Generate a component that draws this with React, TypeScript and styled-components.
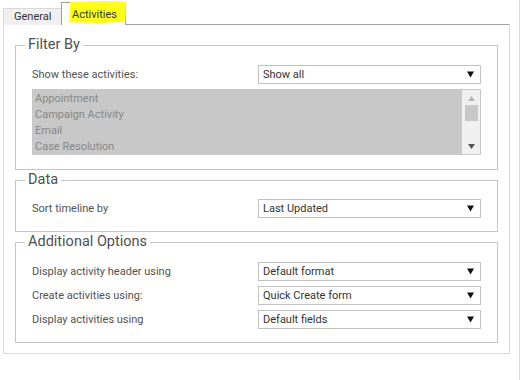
import React from "react";
import styled, { createGlobalStyle } from "styled-components";

const Global = createGlobalStyle`
  html, body { margin: 0; padding: 0; background: #ffffff; }
  body { font-family: "Segoe UI", Roboto, "Open Sans", sans-serif; color: #444; }
  * { box-sizing: border-box; }
`;

const Page = styled.div`
  width: 520px;
  min-height: 380px;
  padding-left: 3px;
  border-right: 1px solid #dcdcdc;
`;

const Window = styled.div`
  width: 507px;
  display: flex;
  flex-direction: column;
`;

const TabBar = styled.div`
  display: flex;
  align-items: flex-end;
  height: 25px;
`;

const Tab = styled.div<{ $active?: boolean }>`
  position: relative;
  height: ${(p) => (p.$active ? "23px" : "17px")};
  padding-left: 10px;
  width: ${(p) => (p.$active ? "65px" : "59px")};
  font-size: 11px;
  line-height: ${(p) => (p.$active ? "24px" : "16px")};
  color: #333;
  background: ${(p) => (p.$active ? "#ffffff" : "#f0f0f0")};
  border: 1px solid ${(p) => (p.$active ? "#a0a0a0" : "#d9d9d9")};
  border-bottom: ${(p) => (p.$active ? "none" : "1px solid #f0f0f0")};
  ${(p) => (p.$active ? "margin-left: -1px;" : "")}
`;

const Highlight = styled.span`
  position: absolute;
  left: 7px;
  top: -2px;
  width: 57px;
  height: 22px;
  background: #ffff1a;
  clip-path: polygon(2% 4%, 60% 0, 100% 2%, 99% 94%, 55% 100%, 0 97%);
`;

const TabLabel = styled.span`
  position: relative;
`;

const TabFill = styled.div`
  flex: 1;
  height: 1px;
  background: #a0a0a0;
`;

const Panel = styled.div`
  display: flex;
  flex-direction: column;
  padding: 13px 11px 10px 11px;
  border: 1px solid #d9d9d9;
  border-top: none;
  margin-top: -1px;
`;

const Group = styled.fieldset<{ $gap?: number }>`
  margin: ${(p) => p.$gap ?? 0}px 0 0 0;
  padding: 0 16px;
  border: 1px solid #c6c6c6;
  min-width: 0;
`;

const Legend = styled.legend`
  margin-left: -7px;
  padding: 0 3px;
  font-size: 14.5px;
  line-height: 16px;
  color: #505050;
`;

const GroupBody = styled.div<{ $bottom: number; $top?: number }>`
  display: flex;
  flex-direction: column;
  gap: 5px;
  padding: ${(p) => p.$top ?? 12}px 0 ${(p) => p.$bottom}px 0;
`;

const Row = styled.div`
  display: grid;
  grid-template-columns: 226px 223px;
  align-items: center;
`;

const Label = styled.span`
  font-size: 11px;
  line-height: 19px;
  color: #525252;
`;

const Select = styled.div`
  height: 19px;
  display: flex;
  align-items: center;
  justify-content: space-between;
  padding: 0 6px 0 4px;
  border: 1px solid #c2c2c2;
  background: #fff;
  font-size: 11px;
  color: #333;
`;

const ListBox = styled.div`
  height: 66px;
  width: 449px;
  display: flex;
  background: #c8c8c8;
  border: 1px solid #c8c8c8;
`;

const Items = styled.div`
  flex: 1;
  padding: 1px 0 0 2px;
  display: flex;
  flex-direction: column;
`;

const Item = styled.span`
  font-size: 11px;
  line-height: 16px;
  color: #878787;
`;

const ScrollBar = styled.div`
  width: 18px;
  background: #f0f0f0;
  display: flex;
  flex-direction: column;
  align-items: center;
  padding: 6px 0 5px 0;
`;

const Thumb = styled.div`
  width: 13px;
  height: 16px;
  margin-top: 4px;
  background: #c8c8c8;
`;

const ScrollSpacer = styled.div`
  flex: 1;
`;

const Arrow = ({ color = "#111", up = false }: { color?: string; up?: boolean }) => (
  <svg width="7" height="5" viewBox="0 0 7 5">
    <polygon points={up ? "0,5 7,5 3.5,0" : "0,0 7,0 3.5,5"} fill={color} />
  </svg>
);

const SelectArrow = () => (
  <svg width="7" height="7" viewBox="0 0 7 7">
    <polygon points="0,0.5 7,0.5 3.5,6.5" fill="#111" />
  </svg>
);

const Dropdown = ({ value }: { value: string }) => (
  <Select>
    <span>{value}</span>
    <SelectArrow />
  </Select>
);

export default function App() {
  return (
    <>
      <Global />
      <Page>
        <Window>
          <TabBar>
            <Tab>General</Tab>
            <Tab $active>
              <Highlight />
              <TabLabel>Activities</TabLabel>
            </Tab>
            <TabFill />
          </TabBar>
          <Panel>
            <Group>
              <Legend>Filter By</Legend>
              <GroupBody $bottom={14}>
                <Row>
                  <Label>Show these activities:</Label>
                  <Dropdown value="Show all" />
                </Row>
                <ListBox>
                  <Items>
                    <Item>Appointment</Item>
                    <Item>Campaign Activity</Item>
                    <Item>Email</Item>
                    <Item>Case Resolution</Item>
                  </Items>
                  <ScrollBar>
                    <Arrow up color="#b4b4b4" />
                    <Thumb />
                    <ScrollSpacer />
                    <Arrow color="#555" />
                  </ScrollBar>
                </ListBox>
              </GroupBody>
            </Group>
            <Group $gap={2}>
              <Legend>Data</Legend>
              <GroupBody $bottom={13} $top={11}>
                <Row>
                  <Label>Sort timeline by</Label>
                  <Dropdown value="Last Updated" />
                </Row>
              </GroupBody>
            </Group>
            <Group $gap={2}>
              <Legend>Additional Options</Legend>
              <GroupBody $bottom={13}>
                <Row>
                  <Label>Display activity header using</Label>
                  <Dropdown value="Default format" />
                </Row>
                <Row>
                  <Label>Create activities using:</Label>
                  <Dropdown value="Quick Create form" />
                </Row>
                <Row>
                  <Label>Display activities using</Label>
                  <Dropdown value="Default fields" />
                </Row>
              </GroupBody>
            </Group>
          </Panel>
        </Window>
      </Page>
    </>
  );
}
